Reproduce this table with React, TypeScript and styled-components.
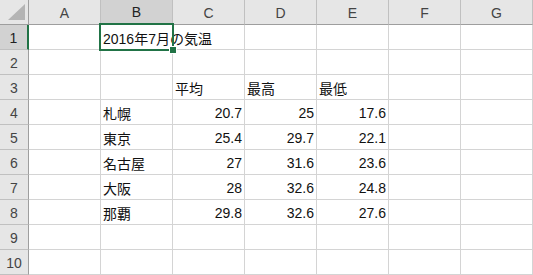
import React from "react";
import styled, { createGlobalStyle, css } from "styled-components";

const GlobalStyle = createGlobalStyle`
  html, body {
    margin: 0;
    padding: 0;
    background: #ffffff;
  }
  body {
    font-family: "Liberation Sans", "Noto Sans CJK JP", sans-serif;
  }
`;

const COLS = ["A", "B", "C", "D", "E", "F", "G"];
const ROW_COUNT = 10;

type CellValue = { text: string; align?: "left" | "right" };

// Sheet contents keyed by "row:col" (1-based row, column letter)
const DATA: Record<string, CellValue> = {
  "1:B": { text: "2016年7月の気温" },
  "3:C": { text: "平均" },
  "3:D": { text: "最高" },
  "3:E": { text: "最低" },
};

const cities: [string, string, string, string][] = [
  ["札幌", "20.7", "25", "17.6"],
  ["東京", "25.4", "29.7", "22.1"],
  ["名古屋", "27", "31.6", "23.6"],
  ["大阪", "28", "32.6", "24.8"],
  ["那覇", "29.8", "32.6", "27.6"],
];
cities.forEach(([name, avg, hi, lo], i) => {
  const r = i + 4;
  DATA[`${r}:B`] = { text: name };
  DATA[`${r}:C`] = { text: avg, align: "right" };
  DATA[`${r}:D`] = { text: hi, align: "right" };
  DATA[`${r}:E`] = { text: lo, align: "right" };
});

const ACTIVE = { row: 1, col: "B" };

const Sheet = styled.div`
  display: grid;
  grid-template-columns: 29px repeat(7, 72px);
  grid-template-rows: 25px repeat(${ROW_COUNT}, 25px);
  width: 533px;
  height: 275px;
  overflow: hidden;
  background: #ffffff;
`;

const headerBase = css`
  box-sizing: border-box;
  display: flex;
  align-items: center;
  justify-content: center;
  background: #e6e6e6;
  color: #444444;
  font-size: 14px;
  font-family: "Liberation Sans", sans-serif;
`;

const Corner = styled.div`
  ${headerBase};
  position: relative;
  border-right: 1px solid #9e9e9e;
  border-bottom: 1px solid #9e9e9e;
  align-items: flex-end;
  justify-content: flex-end;
  padding: 0 3px 4px 0;
`;

const ColHeader = styled.div<{ $active?: boolean }>`
  ${headerBase};
  padding-top: 1px;
  border-right: 1px solid #c0c0c0;
  border-bottom: 1px solid #9e9e9e;
  ${(p) =>
    p.$active &&
    css`
      background: #d2d2d2;
      color: #217346;
      border-bottom: 2px solid #217346;
      color: #222222;
    `}
`;

const RowHeader = styled.div<{ $active?: boolean }>`
  ${headerBase};
  border-right: 1px solid #9e9e9e;
  border-bottom: 1px solid #c0c0c0;
  padding-top: 1px;
  ${(p) =>
    p.$active &&
    css`
      background: #d2d2d2;
      border-right: 2px solid #217346;
      color: #222222;
    `}
`;

const Cell = styled.div<{ $align?: "left" | "right"; $overflow?: boolean }>`
  box-sizing: border-box;
  position: relative;
  display: flex;
  align-items: center;
  justify-content: ${(p) => (p.$align === "right" ? "flex-end" : "flex-start")};
  padding: 1px 2px 0 2px;
  border-right: 1px solid ${(p) => (p.$overflow ? "transparent" : "#d4d4d4")};
  border-bottom: 1px solid #d4d4d4;
  font-size: 14px;
  color: #111111;
  white-space: nowrap;
  overflow: visible;
`;

const CellText = styled.span`
  position: relative;
  z-index: 1;
`;

// Green frame around the active cell, drawn over the gridlines
const Selection = styled.div`
  position: absolute;
  left: -2px;
  top: -2px;
  width: 75px;
  height: 28px;
  box-sizing: border-box;
  border: 2px solid #217346;
  pointer-events: none;
  z-index: 2;
`;

const FillHandle = styled.div`
  position: absolute;
  right: -4px;
  bottom: -4px;
  width: 6px;
  height: 6px;
  background: #217346;
  box-shadow: 0 0 0 1px #ffffff;
`;

const CornerTriangle = () => (
  <svg width="17" height="16" viewBox="0 0 17 16">
    <polygon points="17,0 17,16 0,16" fill="#b4b4b4" />
  </svg>
);

export default function App() {
  const rows = Array.from({ length: ROW_COUNT }, (_, i) => i + 1);
  return (
    <>
      <GlobalStyle />
      <Sheet>
        <Corner>
          <CornerTriangle />
        </Corner>
        {COLS.map((c) => (
          <ColHeader key={c} $active={c === ACTIVE.col}>
            {c}
          </ColHeader>
        ))}
        {rows.map((r) => (
          <React.Fragment key={r}>
            <RowHeader $active={r === ACTIVE.row}>{r}</RowHeader>
            {COLS.map((c) => {
              const v = DATA[`${r}:${c}`];
              const isActive = r === ACTIVE.row && c === ACTIVE.col;
              return (
                <Cell key={c} $align={v?.align} $overflow={isActive}>
                  {v && <CellText>{v.text}</CellText>}
                  {isActive && (
                    <Selection>
                      <FillHandle />
                    </Selection>
                  )}
                </Cell>
              );
            })}
          </React.Fragment>
        ))}
      </Sheet>
    </>
  );
}
